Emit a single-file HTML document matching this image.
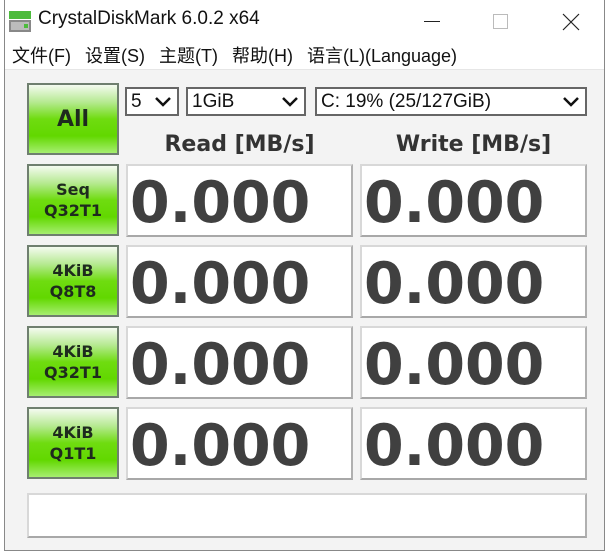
<!DOCTYPE html>
<html><head><meta charset="utf-8"><style>
*{margin:0;padding:0;box-sizing:border-box}
body{width:610px;height:554px;background:#fff;position:relative;overflow:hidden;font-family:"Liberation Sans","Noto Sans CJK SC",sans-serif}
.win{position:absolute;left:4px;top:0;width:601px;height:551px;border:1px solid #888;border-top:none;background:#fff}
.title{position:absolute;left:38px;top:8px;font-size:19px;color:#111}
.menu{position:absolute;left:12px;top:42px;font-size:18px;color:#111;white-space:nowrap}
.menu span{margin-right:14px}
.client{position:absolute;left:5px;top:69px;width:599px;height:481px;background:#f3f3f3;border-top:1px solid #e6e6e6}
.abs{position:absolute}
.btn{position:absolute;left:27px;width:92px;height:72px;border:2px solid #6f7f6f;background:linear-gradient(#f4fbf0 0%,#b6ea92 25%,#6fdc10 50%,#62d800 75%,#a6ee70 100%);font-family:"DejaVu Sans",sans-serif;font-weight:bold;color:#1e2a1e;text-align:center;display:flex;align-items:center;justify-content:center;font-size:16px;line-height:21px}
.box{position:absolute;width:227px;height:73px;background:#fff;border:2px solid #d8d8d8;border-right-color:#b0b0b0;border-bottom-color:#a8a8a8;font-family:"DejaVu Sans",sans-serif;font-weight:bold;font-size:57px;color:#404040;line-height:74px;padding-left:2px}
.sel{position:absolute;top:87px;height:29px;border:2px solid #666;background:#fff;font-size:19px;color:#111;padding-left:4px;line-height:25px}
.sel svg{position:absolute;right:6px;top:8px}
.hdr{position:absolute;top:132px;font-family:"DejaVu Sans",sans-serif;font-weight:bold;font-size:22px;color:#333;text-align:center;width:227px}
</style></head><body>
<div class="win"></div>
<svg class="abs" style="left:9px;top:11px" width="24" height="22"><rect x="0" y="0" width="22" height="8" fill="#4cbb3c"/><rect x="0" y="9" width="22" height="12" fill="#888"/><rect x="2" y="11" width="18" height="8" fill="#bbb"/><rect x="15" y="13" width="4" height="4" fill="#4cbb3c"/></svg>
<div class="title">CrystalDiskMark 6.0.2 x64</div>
<div class="abs" style="left:424px;top:21px;width:16px;height:1px;background:#222"></div>
<div class="abs" style="left:493px;top:14px;width:15px;height:15px;border:1px solid #bbb"></div>
<svg class="abs" style="left:562px;top:13px" width="18" height="18"><path d="M1 1L17 17M17 1L1 17" stroke="#222" stroke-width="1.2"/></svg>
<div class="menu"><span>文件(F)</span><span>设置(S)</span><span>主题(T)</span><span>帮助(H)</span><span>语言(L)(Language)</span></div>
<div class="client"></div>
<div class="btn" style="top:83px;font-size:22px">All</div>
<div class="sel" style="left:125px;width:54px">5<svg width="16" height="10"><path d="M1 1L8 8L15 1" stroke="#111" stroke-width="2.5" fill="none"/></svg></div>
<div class="sel" style="left:186px;width:120px">1GiB<svg width="16" height="10"><path d="M1 1L8 8L15 1" stroke="#111" stroke-width="2.5" fill="none"/></svg></div>
<div class="sel" style="left:315px;width:272px">C: 19% (25/127GiB)<svg width="16" height="10"><path d="M1 1L8 8L15 1" stroke="#111" stroke-width="2.5" fill="none"/></svg></div>
<div class="hdr" style="left:126px">Read [MB/s]</div>
<div class="hdr" style="left:360px">Write [MB/s]</div>

<div class="btn" style="top:164px">Seq<br>Q32T1</div>
<div class="box" style="left:126px;top:164px">0.000</div>
<div class="box" style="left:360px;top:164px">0.000</div>
<div class="btn" style="top:245px">4KiB<br>Q8T8</div>
<div class="box" style="left:126px;top:245px">0.000</div>
<div class="box" style="left:360px;top:245px">0.000</div>
<div class="btn" style="top:326px">4KiB<br>Q32T1</div>
<div class="box" style="left:126px;top:326px">0.000</div>
<div class="box" style="left:360px;top:326px">0.000</div>
<div class="btn" style="top:407px">4KiB<br>Q1T1</div>
<div class="box" style="left:126px;top:407px">0.000</div>
<div class="box" style="left:360px;top:407px">0.000</div>
<div class="box" style="left:27px;top:493px;width:560px;height:45px"></div>
</body></html>
